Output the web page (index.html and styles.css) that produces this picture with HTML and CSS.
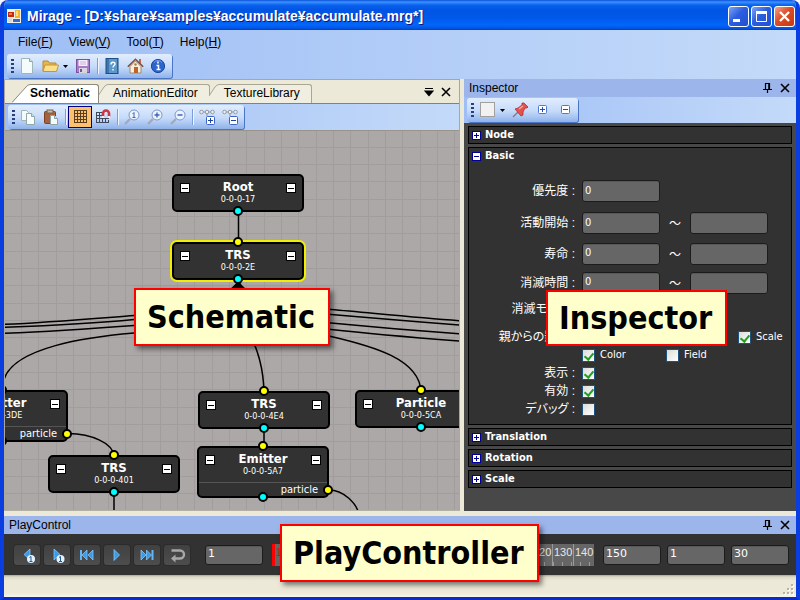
FILE: index.html
```html
<!DOCTYPE html>
<html lang="ja">
<head>
<meta charset="utf-8">
<title>Mirage</title>
<link rel="stylesheet" href="styles.css">
</head>
<body>
<div class="window">
  <header class="titlebar">
    <svg class="app-icon" width="14" height="14" viewBox="0 0 14 14"><rect width="14" height="14" fill="#f4efe0"/><rect x="1" y="3" width="6" height="5" fill="#c22a10"/><rect x="2" y="4" width="3" height="2" fill="#ef7a50"/><rect x="8" y="1" width="5" height="8" fill="#f6b52c"/><rect x="9" y="2" width="2" height="5" fill="#ffe08a"/><rect x="1" y="9" width="4" height="4" fill="#d8d8d8"/><rect x="6" y="10" width="7" height="3" fill="#3569c8"/></svg>
    <h1>Mirage - [D:¥share¥samples¥accumulate¥accumulate.mrg*]</h1>
    <div class="window-buttons">
      <button aria-label="Minimize"><svg width="19" height="19"><rect x="4" y="12" width="7" height="3" fill="#fff"/></svg></button>
      <button aria-label="Maximize"><svg width="19" height="19"><path d="M4.500 6v8.500h10V6" fill="none" stroke="#fff"/><rect x="4" y="4" width="11" height="3" fill="#fff"/></svg></button>
      <button class="close" aria-label="Close"><svg width="19" height="19"><path d="M5 5l9 9M14 5l-9 9" stroke="#fff" stroke-width="2.400"/></svg></button>
    </div>
  </header>

  <div class="top">
    <nav class="menu">
      <button>File(<u>F</u>)</button><button>View(<u>V</u>)</button><button>Tool(<u>T</u>)</button><button>Help(<u>H</u>)</button>
    </nav>
    <div class="toolbar">
      <i class="grip"></i>
      <button class="tool" aria-label="New"><svg width="16" height="16"><path d="M2.500.5h8l3 3v12h-11z" fill="#f4fbfb" stroke="#9fb5b8"/><path d="M10.500.5v3h3" fill="#d5e5e8" stroke="#8ba4a8"/></svg></button>
      <button class="tool wide" aria-label="Open"><svg width="17" height="16"><path d="M1 13V3h5l1.500 2H14v3" fill="#e7b54b" stroke="#b88a28"/><path d="M1 13.500L3 7h13.500l-2 6.500z" fill="#fbe08c" stroke="#c4953a"/></svg><svg width="5" height="16"><path d="M0 7h5L2.500 10z"/></svg></button>
      <button class="tool" aria-label="Save"><svg width="16" height="16"><rect x="1.500" y="1.500" width="13" height="13" fill="#a67cc9" stroke="#7c52a0"/><rect x="3.500" y="2" width="9" height="6" fill="#f3edf8"/><path d="M5 4h6M5 6h6" stroke="#c8b4d8"/><rect x="4" y="10" width="8" height="5" fill="#d9d5de"/><rect x="5" y="11" width="2" height="3" fill="#74558e"/></svg></button>
      <i class="sep"></i>
      <button class="tool" aria-label="Help"><svg width="16" height="16"><rect x="2" y=".5" width="12" height="15" fill="#3a77ad" stroke="#1d4f82"/><rect x="5" y="1" width="8" height="14" fill="#5b99ca"/><path d="M7 6.500c0-3 4-3 4-.5 0 1.500-2 1.500-2 3.500M9 11v1.500" fill="none" stroke="#fff" stroke-width="1.400"/></svg></button>
      <button class="tool" aria-label="Home"><svg width="17" height="16"><path d="M3 8.500L8.500 3 14 8.500V15H3z" fill="#f8eed8" stroke="#9a8a78"/><path d="M12 5V1h2v6" fill="#b96a52"/><path d="M.8 8.800L8.500 1.200l7.700 7.600" fill="none" stroke="#7c5140" stroke-width="1.500"/><rect x="7" y="9" width="4" height="6" fill="#b8652f"/><circle cx="8.500" cy="6.500" r="1.200" fill="#a87850"/></svg></button>
      <button class="tool" aria-label="About"><svg width="16" height="16"><circle cx="8" cy="8" r="6.600" fill="#2d65cc" stroke="#1a469f"/><path d="M4 4.500a5 5 0 018 0" stroke="#75a2ec" fill="none"/><path d="M6.500 7.500h2V11M6.500 11.500h4M8 3.500v2" stroke="#fff" stroke-width="1.500" fill="none"/></svg></button>
    </div>
  </div>

  <main class="dock">
    <section class="schematic">
      <div class="tabs">
        <button class="tab active"><svg width="18" height="19"><path d="M0 19L14 3q2-2.500 4-2.500V19z" fill="#fff"/><path d="M0 18.500L14 3q2-2.500 4-2.500" fill="none" stroke="#8d8a7c"/></svg><span>Schematic</span></button>
        <button class="tab"><svg width="10" height="19"><path d="M0 12L6 3Q8 .5 10 .5V19H0z" fill="#f0eee1"/><path d="M0 12L6 3Q8 .5 10 .5" fill="none" stroke="#a9a694"/></svg><span>AnimationEditor</span></button>
        <button class="tab"><svg width="10" height="19"><path d="M0 12L6 3Q8 .5 10 .5V19H0z" fill="#f0eee1"/><path d="M0 12L6 3Q8 .5 10 .5" fill="none" stroke="#a9a694"/></svg><span>TextureLibrary</span></button>
        <div class="tab-actions">
          <button class="glyph" aria-label="Tab list"><svg width="10" height="10"><path d="M1 1.500h8M1 4h8L5 8.500z" stroke="#000" stroke-width="1.200"/></svg></button>
          <button class="glyph" aria-label="Close tab"><svg width="10" height="10"><path d="M1 1l8 8M9 1L1 9" stroke="#000" stroke-width="1.600"/></svg></button>
        </div>
      </div>
      <div class="tool-strip">
        <div class="toolbar">
          <i class="grip"></i>
          <button class="tool" aria-label="Copy"><svg width="16" height="16"><path d="M1.500 1.500h5l2 2v8h-7z" fill="#f4fbfb" stroke="#9fb5b8"/><path d="M6.500 4.500h5l3 3v8h-8z" fill="#f8fdfd" stroke="#8fa8ac"/><path d="M11.500 4.500v3h3" fill="#cfe0e4" stroke="#8fa8ac"/></svg></button>
          <button class="tool" aria-label="Paste"><svg width="16" height="16"><rect x="1.500" y="2.500" width="11" height="12" rx="1" fill="#a5623c" stroke="#7a4123"/><rect x="4" y="1" width="6" height="3" fill="#c9b9a8" stroke="#77614f"/><path d="M7.500 6.500h4l3 3v6h-7z" fill="#f5fafa" stroke="#8fa2a6"/><path d="M11.500 6.500v3h3" fill="#d4e2e4" stroke="#8fa2a6"/></svg></button>
          <i class="sep"></i>
          <button class="tool pressed" aria-label="Grid"><svg width="16" height="16"><path d="M2.500 1v13M5.500 1v13M8.500 1v13M11.500 1v13M14.500 1v13M2 1.500h13M2 4.500h13M2 7.500h13M2 10.500h13M2 13.500h13" stroke="#5a3e1c"/></svg></button>
          <button class="tool" aria-label="Snap"><svg width="16" height="16"><path d="M1.500 3v11M4.500 3v11M7.500 3v11M10.500 9v5M13.500 11v3M1 3.500h6M1 6.500h7M1 9.500h13M1 13.500h13" stroke="#40485c"/><path d="M8 8V4.500a3 3 0 016 0V8" fill="none" stroke="#cf3340" stroke-width="2.600"/><path d="M6.700 8h2.600M12.700 8h2.600" stroke="#eee" stroke-width="2"/></svg></button>
          <i class="sep"></i>
          <button class="tool" aria-label="Actual size"><svg width="17" height="16"><path d="M1 15l5-5" stroke="#a3a9b8" stroke-width="2.400"/><circle cx="10" cy="6" r="5" fill="#eaf4ff" stroke="#8196c6"/><path d="M8.500 5l1.500-1.500V9M8.500 8.500h3" fill="none" stroke="#3f62bd"/></svg></button>
          <button class="tool" aria-label="Zoom in"><svg width="17" height="16"><path d="M1 15l5-5" stroke="#a3a9b8" stroke-width="2.400"/><circle cx="10" cy="6" r="5" fill="#eaf4ff" stroke="#8196c6"/><path d="M7.500 6h5M10 3.500v5" stroke="#3f62bd" stroke-width="1.400"/></svg></button>
          <button class="tool" aria-label="Zoom out"><svg width="17" height="16"><path d="M1 15l5-5" stroke="#a3a9b8" stroke-width="2.400"/><circle cx="10" cy="6" r="5" fill="#eaf4ff" stroke="#8196c6"/><path d="M7.500 6h5" stroke="#3f62bd" stroke-width="1.400"/></svg></button>
          <i class="sep"></i>
          <button class="tool" aria-label="Expand all"><svg width="16" height="16"><path d="M3 3h10M8 3v4" stroke="#8e98a8"/><circle cx="2.500" cy="3" r="1.800" fill="#eee" stroke="#9299a4"/><circle cx="8" cy="3" r="1.800" fill="#eee" stroke="#9299a4"/><circle cx="13.500" cy="3" r="1.800" fill="#eee" stroke="#9299a4"/><rect x="7.500" y="7.500" width="8" height="8" rx="1" fill="#fff" stroke="#3d63c4"/><path d="M9 11.500h5M11.500 9v5" stroke="#20429f"/></svg></button>
          <button class="tool" aria-label="Collapse all"><svg width="16" height="16"><path d="M3 3h10M8 3v4" stroke="#8e98a8"/><circle cx="2.500" cy="3" r="1.800" fill="#eee" stroke="#9299a4"/><circle cx="8" cy="3" r="1.800" fill="#eee" stroke="#9299a4"/><circle cx="13.500" cy="3" r="1.800" fill="#eee" stroke="#9299a4"/><rect x="7.500" y="7.500" width="8" height="8" rx="1" fill="#fff" stroke="#3d63c4"/><path d="M9 11.500h5" stroke="#20429f"/></svg></button>
        </div>
      </div>
      <div class="canvas">
        <svg class="edges" width="100%" height="100%">
          <defs><pattern id="grid" width="52" height="52" patternUnits="userSpaceOnUse" x="16" y="16"><path d="M.5 0v52M17.500 0v52M35.500 0v52M0 .5h52M0 17.500h52M0 34.500h52" stroke="#a19d9c"/></pattern></defs>
          <rect width="100%" height="100%" fill="url(#grid)"/>
          <g transform="translate(-5 -130)" fill="none" stroke="#000" stroke-width="1.500">
            <path d="M238.500 211v31M114 491v30M264 428v18"/>
            <path d="M238.500 281C220 304 180 311 134 314.500S40 322 0 323.500"/>
            <path d="M238.500 281C220 306 180 314 134 318.500S40 325 0 326.500"/>
            <path d="M238.500 281C220 309 180 321 134 324.500S40 331 0 332.500"/>
            <path d="M238.500 281C200 320 170 329 134 332S4 345 3 385"/>
            <path d="M238.500 281C250 300 290 305 331 308.500S420 317 464 320"/>
            <path d="M238.500 281C250 304 290 310 331 313.500S420 321 464 324.500"/>
            <path d="M238.500 281C250 307 290 318 331 322S420 330 464 333"/>
            <path d="M238.500 281C250 309 290 324 331 328.500S420 337 464 340.500"/>
            <path d="M238.500 281C250 310 290 326 331 335.500S420 358 421 391"/>
            <path d="M238.500 281C240 330 263 340 264 392"/>
            <path d="M68 432.500C92 433 113 442 114 455M329 489C343 489 357 502 359 514"/>
            <path d="M238.500 282l-9 8h18z" fill="#000" stroke="none"/>
          </g>
        </svg>

        <article class="node n-root"><button class="fold" aria-label="Fold inputs"></button><div><h2>Root</h2><p>0-0-0-17</p></div><button class="fold" aria-label="Fold outputs"></button><i class="port out"></i></article>
        <article class="node n-trs selected"><button class="fold" aria-label="Fold inputs"></button><div><h2>TRS</h2><p>0-0-0-2E</p></div><button class="fold" aria-label="Fold outputs"></button><i class="port in"></i><i class="port out"></i></article>
        <article class="node n-em1 tall"><button class="fold" aria-label="Fold inputs"></button><div><h2>Emitter</h2><p>0-0-0-3DE</p></div><button class="fold" aria-label="Fold outputs"></button><footer>particle</footer><i class="port in"></i><i class="port out"></i><i class="port side"></i></article>
        <article class="node n-trs401"><button class="fold" aria-label="Fold inputs"></button><div><h2>TRS</h2><p>0-0-0-401</p></div><button class="fold" aria-label="Fold outputs"></button><i class="port in"></i><i class="port out"></i></article>
        <article class="node n-trs4e4"><button class="fold" aria-label="Fold inputs"></button><div><h2>TRS</h2><p>0-0-0-4E4</p></div><button class="fold" aria-label="Fold outputs"></button><i class="port in"></i><i class="port out"></i></article>
        <article class="node n-em2 tall"><button class="fold" aria-label="Fold inputs"></button><div><h2>Emitter</h2><p>0-0-0-5A7</p></div><button class="fold" aria-label="Fold outputs"></button><footer>particle</footer><i class="port in"></i><i class="port out"></i><i class="port side"></i></article>
        <article class="node n-part"><button class="fold" aria-label="Fold inputs"></button><div><h2>Particle</h2><p>0-0-0-5CA</p></div><button class="fold" aria-label="Fold outputs"></button><i class="port in"></i><i class="port out"></i></article>
      </div>
      <div class="callout c-schematic">Schematic</div>
    </section>

    <section class="inspector">
      <div class="panel-head"><h2>Inspector</h2>
        <button class="glyph" aria-label="Pin"><svg width="10" height="10"><path d="M2.500 6V.5h4V6M5.800.5V6M0 6.500h9M4.500 7v3" fill="none" stroke="#000" stroke-width="1.200"/></svg></button>
        <button class="glyph" aria-label="Close Inspector"><svg width="10" height="10"><path d="M1 1l8 8M9 1L1 9" stroke="#000" stroke-width="1.600"/></svg></button>
      </div>
      <div class="tool-strip">
        <div class="toolbar compact">
          <i class="grip"></i>
          <button class="tool wide" aria-label="Colour"><svg width="16" height="16"><rect x=".5" y=".5" width="14" height="14" fill="#f1f1f1" stroke="#a0a0a0"/></svg><svg width="5" height="16"><path d="M0 7h5L2.500 10z"/></svg></button>
          <button class="tool" aria-label="Pin selection"><svg width="16" height="16"><path d="M1 15l5-5" stroke="#77808c" stroke-width="1.500"/><path d="M3 7l3-1 4-3V1h2l4 4-1 1h-2l-2 4v3l-2 1z" fill="#e2524f" stroke="#b52c30" stroke-width=".8"/><path d="M7 7l4-3" stroke="#f9aaa4" stroke-width="1.300"/></svg></button>
          <button class="tool" aria-label="Expand groups"><svg width="16" height="16"><rect x="3.500" y="3.500" width="8" height="8" rx="1" fill="#fff" stroke="#4e78dc"/><path d="M5 7.500h5M7.500 5v5" stroke="#2348b4"/></svg></button>
          <button class="tool" aria-label="Collapse groups"><svg width="16" height="16"><rect x="3.500" y="3.500" width="8" height="8" rx="1" fill="#fff" stroke="#4e78dc"/><path d="M5 7.500h5" stroke="#2348b4"/></svg></button>
        </div>
      </div>
      <div class="groups">
        <section class="group"><button class="group-head"><i class="plus"></i>Node</button></section>
        <section class="group">
          <button class="group-head"><i class="plus open"></i>Basic</button>
          <form class="fields">
            <div class="row lead"><label for="priority">優先度 :</label><input id="priority" type="text" value="0"></div>
            <div class="row lead"><label for="start">活動開始 :</label><input id="start" type="text" value="0"><span class="tilde">～</span><input type="text" aria-label="活動開始 to"></div>
            <div class="row"><label for="life">寿命 :</label><input id="life" type="text" value="0"><span class="tilde">～</span><input type="text" aria-label="寿命 to"></div>
            <div class="row"><label for="end">消滅時間 :</label><input id="end" type="text" value="0"><span class="tilde">～</span><input type="text" aria-label="消滅時間 to"></div>
            <div class="row mode"><span class="name">消滅モード :</span></div>
            <div class="row line"><span class="name">親からの影響 :</span><div class="checks"><label class="third"><input type="checkbox" checked>Scale</label></div></div>
            <div class="row line"><span class="name"></span><div class="checks"><label><input type="checkbox" checked>Color</label><label><input type="checkbox">Field</label></div></div>
            <div class="row line"><label for="show">表示 :</label><input id="show" type="checkbox" checked></div>
            <div class="row line"><label for="valid">有効 :</label><input id="valid" type="checkbox" checked></div>
            <div class="row line"><label for="debug">デバッグ :</label><input id="debug" type="checkbox"></div>
          </form>
        </section>
        <section class="group"><button class="group-head"><i class="plus"></i>Translation</button></section>
        <section class="group"><button class="group-head"><i class="plus"></i>Rotation</button></section>
        <section class="group"><button class="group-head"><i class="plus"></i>Scale</button></section>
      </div>
      <div class="callout c-inspector">Inspector</div>
    </section>
  </main>

  <section class="play">
    <div class="panel-head"><h2>PlayControl</h2>
      <button class="glyph" aria-label="Pin"><svg width="10" height="10"><path d="M2.500 6V.5h4V6M5.800.5V6M0 6.500h9M4.500 7v3" fill="none" stroke="#000" stroke-width="1.200"/></svg></button>
      <button class="glyph" aria-label="Close PlayControl"><svg width="10" height="10"><path d="M1 1l8 8M9 1L1 9" stroke="#000" stroke-width="1.600"/></svg></button>
    </div>
    <div class="play-body">
      <div class="transport">
        <button aria-label="Step back"><svg width="26" height="18"><path d="M16 3v11L10 8.500z" fill="#3a9be8" stroke="#8fd0ff" stroke-width=".7"/><circle cx="17" cy="13" r="4" fill="#e6f3ff"/><path d="M15.500 11.500L17 10.500V16M15.500 15.500h3" stroke="#1b5a9e" fill="none"/></svg></button>
        <button aria-label="Step forward"><svg width="26" height="18"><path d="M10 3v11l6-5.500z" fill="#3a9be8" stroke="#8fd0ff" stroke-width=".7"/><circle cx="16.500" cy="13" r="4" fill="#e6f3ff"/><path d="M15 11.500l1.500-1V16M15 15.500h3" stroke="#1b5a9e" fill="none"/></svg></button>
        <button aria-label="First frame"><svg width="26" height="18"><path d="M7 4v10" stroke="#63b7f5" stroke-width="2"/><path d="M13 4v10L8 9zM19 4v10l-5-5z" fill="#3a9be8" stroke="#8fd0ff" stroke-width=".7"/></svg></button>
        <button aria-label="Play"><svg width="26" height="18"><path d="M10 3.500v11L15.500 9z" fill="#3a9be8" stroke="#8fd0ff" stroke-width=".7"/></svg></button>
        <button aria-label="Last frame"><svg width="26" height="18"><path d="M18.500 4v10" stroke="#63b7f5" stroke-width="2"/><path d="M7 4v10l5-5zM12.500 4v10l5-5z" fill="#3a9be8" stroke="#8fd0ff" stroke-width=".7"/></svg></button>
        <button aria-label="Loop"><svg width="26" height="18"><path d="M7.500 4.500H16a3.500 3.500 0 010 8h-5" fill="none" stroke="#a8a8a8" stroke-width="2.400"/><path d="M11.500 8.500v8l-4.500-4z" fill="#a8a8a8"/></svg></button>
      </div>
      <input class="num" type="text" value="1" aria-label="Current frame">
      <div class="timeline"><span class="now">1</span><span></span><span></span><span></span><span></span><span></span><span></span><span></span><span></span><span></span><span></span><span></span><span>120</span><span>130</span><span>140</span></div>
      <div class="range">
        <input class="num" type="text" value="150" aria-label="Last frame number">
        <input class="num" type="text" value="1" aria-label="Step">
        <input class="num" type="text" value="30" aria-label="Frame rate">
      </div>
    </div>
    <div class="callout c-play">PlayController</div>
  </section>
  <footer class="status"><svg width="12" height="12"><path d="M9 1h2v2h-2zM9 5h2v2h-2zM5 5h2v2h-2zM9 9h2v2h-2zM5 9h2v2h-2zM1 9h2v2h-2z" fill="#fff" transform="translate(1 1)"/><path d="M9 1h2v2h-2zM9 5h2v2h-2zM5 5h2v2h-2zM9 9h2v2h-2zM5 9h2v2h-2zM1 9h2v2h-2z" fill="#b8b4a2"/></svg></footer>
</div>
</body>
</html>
```
FILE: styles.css
```css
* { box-sizing: border-box; }
body { margin: 0; background: #f4f6fb; font: 12px/16px "Liberation Sans", "Noto Sans CJK JP", sans-serif; color: #000; }
h1, h2, p { margin: 0; font-size: inherit; font-weight: normal; }
button { padding: 0; border: 0; background: none; font: inherit; color: inherit; }
svg { display: block; flex: none; }

.window {
  display: flex; flex-direction: column; min-height: 100vh; overflow: hidden;
  border: solid #0a2fd6; border-width: 0 4px 4px; border-color: #0b4fe6 #0a3ee0 #0a2bc8 #0a3ee0;
  border-radius: 8px 8px 0 0; background: #ece9d8;
}

.titlebar {
  display: flex; align-items: center; gap: 6px; height: 30px; margin: 0 -4px; padding: 2px 5px 0 7px;
  background: linear-gradient(#0a50d8 0, #3b93ff 2px, #0a62ee 5px, #0054e3 10px, #0058ea 18px, #0366fb 25px, #0057e8 28px, #0440b8 30px);
  color: #fff;
}
.titlebar h1 { flex: 1; font: bold 14px/18px "Liberation Sans", sans-serif; text-shadow: 1px 1px #0a1883; white-space: nowrap; }
.window-buttons { display: flex; gap: 2px; }
.window-buttons button { width: 21px; height: 21px; border: 1px solid #fff; border-radius: 3px; background: linear-gradient(135deg, #7ea4f5, #2c5de0 45%, #2150d0); }
.window-buttons .close { background: linear-gradient(135deg, #f0a58a, #dc4b25 45%, #c63a13); }

.top { background: linear-gradient(90deg, #9ebef5, #c4daf9); padding-bottom: 1px; }
.menu { display: flex; gap: 16px; height: 24px; padding: 0 14px; align-items: center; }
.toolbar {
  display: inline-flex; align-items: center; gap: 7px; height: 24px; padding: 0 6px 0 4px; margin-left: 3px;
  border-radius: 3px; background: linear-gradient(#e1edfd, #c5dafa 55%, #8fb2ea);
  box-shadow: 1px 1px #4a74c6; vertical-align: top;
}
.toolbar.compact { padding-right: 4px; }
.grip { width: 3px; height: 15px; margin-right: -2px; background: repeating-linear-gradient(#27417e 0 2px, transparent 2px 4px); }
.sep { width: 1px; height: 16px; margin: 0 -1px; background: #7b9edb; box-shadow: 1px 0 #f0f6ff; }
.tool { display: flex; align-items: center; justify-content: center; width: 16px; height: 22px; }
.tool.wide { width: 26px; gap: 4px; }
.tool.pressed { width: 24px; margin: 0 -4px; border: 1px solid #00007f; background: #fdc06d; }

.dock { flex: 1; display: grid; grid-template-columns: 456fr 4px 332fr; border-bottom: 5px solid #ece9d8; }
.schematic { position: relative; display: flex; flex-direction: column; min-width: 0; border: 1px solid #aca899; border-bottom: 1px solid #b5b1a4; }
.tabs { display: flex; align-items: flex-end; height: 24px; padding-left: 7px; background: #ece9d8; border-bottom: 1px solid #85826f; }
.tab { display: flex; height: 19px; position: relative; margin-left: -1px; }
.tab span { height: 19px; padding: 0 11px 0 5px; border: solid #a9a694; border-width: 1px 1px 0 0; border-radius: 0 3px 0 0; background: #f0eee1; line-height: 17px; }
.tab.active { z-index: 1; margin-left: 0; }
.tab.active span { padding: 0 8px 0 0; background: #fff; font-weight: bold; border-color: #8d8a7c; }
.tab-actions { display: flex; gap: 7px; margin: 0 8px 6px auto; }
.glyph { display: block; width: 10px; height: 10px; }
.tool-strip { height: 26px; padding-top: 1px; background: linear-gradient(90deg, #9ebef5, #c4daf9); }
.canvas { position: relative; flex: 1; min-height: 380px; overflow: hidden; background: #aca8a7; border-top: 1px solid #98948c; }
.edges { position: absolute; inset: 0; }

.node {
  position: absolute; display: grid; grid-template-columns: 10px 1fr 10px; align-content: start;
  width: 132px; height: 38px; padding: 4px 6px 0; border: 2px solid #000; border-radius: 5px;
  background: #323232; color: #fff; text-align: center; font-family: "DejaVu Sans Condensed", "DejaVu Sans", sans-serif;
}
.node h2 { font-size: 13px; line-height: 14px; font-weight: bold; }
.node p { font-size: 9px; line-height: 10px; }
.node.tall { height: 52px; }
.node footer { grid-column: 1 / -1; margin: 6px -6px 0; padding-right: 9px; border-top: 1px solid #555; font-size: 11px; line-height: 13px; text-align: right; }
.node.selected { box-shadow: 0 0 0 2px #f2ee00; }
.fold { width: 10px; height: 10px; margin-top: 3px; border: 1px solid #000; background: linear-gradient(#000, #000) 1px 4px / 6px 1px no-repeat #fff; }
.port { position: absolute; width: 10px; height: 10px; border: 2px solid #000; border-radius: 50%; background: #ff0; }
.port.in { left: 59px; top: -7px; }
.port.out { left: 59px; bottom: -6px; background: #0ff; }
.port.side { right: -6px; bottom: 1px; }
.n-root { left: 167px; top: 43px; }
.n-trs { left: 167px; top: 111px; }
.n-em1 { left: -69px; top: 259px; }
.n-trs401 { left: 43px; top: 324px; }
.n-trs4e4 { left: 193px; top: 260px; }
.n-em2 { left: 192px; top: 315px; }
.n-part { left: 350px; top: 259px; }

.inspector { grid-column: 3; position: relative; display: flex; flex-direction: column; background: #484848; }
.panel-head { display: flex; align-items: center; gap: 7px; height: 18px; padding: 0 6px 0 5px; background: #9cb6eb; }
.panel-head h2 { flex: 1; }
.groups { display: flex; flex-direction: column; gap: 3px; padding: 3px 4px 0; background: #484848; }
.group { border: 1px solid #000; background: #323232; color: #fff; }
.group-head { display: flex; align-items: center; gap: 4px; width: 100%; height: 16px; padding-left: 3px; font: bold 11px/16px "DejaVu Sans Condensed", "DejaVu Sans", sans-serif; }
.plus { width: 9px; height: 9px; border: 1px solid #000096; background: linear-gradient(#000096, #000096) center / 5px 1px no-repeat, linear-gradient(#000096, #000096) center / 1px 5px no-repeat #fff; }
.plus.open { background: linear-gradient(#000096, #000096) center / 5px 1px no-repeat #fff; }

.fields { display: flex; flex-direction: column; padding: 11px 4px 6px 0; }
.row { display: flex; align-items: center; height: 29px; }
.row.lead { height: 32px; }
.row.mode { height: 24px; margin-bottom: 7px; }
.row.line { height: 18px; }
.row > label, .name { width: 106px; margin-right: 7px; text-align: right; white-space: nowrap; font-feature-settings: "palt"; }
.row input[type="text"], .num {
  min-width: 0; border: 1px solid #1c1c1c; border-radius: 3px; background: #666; color: #fff;
  box-shadow: inset 0 1px #585858; outline: 0; padding: 0 3px 2px 2px; font: 11px/14px "DejaVu Sans", sans-serif;
}
.row input[type="text"] { width: 78px; height: 22px; font-family: "DejaVu Sans Condensed", "DejaVu Sans", sans-serif; }
.tilde { width: 30px; text-align: center; font-family: "Noto Sans CJK JP", sans-serif; }
input[type="checkbox"] { appearance: none; width: 13px; height: 13px; margin: 0; border: 1px solid #1c5180; background: linear-gradient(135deg, #dcdcd7, #fff); }
input[type="checkbox"]:checked::after { content: ""; display: block; width: 4px; height: 7px; margin: 1px 0 0 3px; border: solid #21a121; border-width: 0 2px 2px 0; rotate: 40deg; }
.checks { display: grid; grid-template-columns: 84px 72px 1fr; flex: 1; font: 11px/16px "DejaVu Sans Condensed", "DejaVu Sans", sans-serif; }
.checks label { display: flex; align-items: center; gap: 5px; }
.checks .third { grid-column: 3; }

.play { position: relative; }
.play-body { display: flex; align-items: center; height: 41px; padding: 0 7px 0 10px; background: #323232; }
.transport { display: flex; gap: 4px; }
.transport button { width: 26px; height: 20px; border-radius: 3px; background: linear-gradient(#414141, #4d4d4d); box-shadow: 0 0 0 1px #2b2b2b; }
.num { width: 58px; height: 20px; margin-left: 15px; }
.range { display: flex; gap: 6px; margin-left: 9px; }
.range .num { margin-left: 0; }
.timeline {
  flex: 1; display: flex; height: 22px; margin-left: 9px; overflow: hidden; border-left: 3px solid #f00; color: #e6e6e6; font-size: 11px; line-height: 16px;
  background: repeating-linear-gradient(90deg, transparent 0 8px, #999 8px 9px) bottom / 100% 4px no-repeat #666;
}
.timeline span { flex: 0 0 21px; border-left: 1px solid #999; padding-left: 1px; }
.timeline .now { flex: 1; border: 0; color: #f00; }
.status { display: flex; justify-content: flex-end; align-items: flex-end; height: 22px; padding: 0 2px 2px 0; background: linear-gradient(#a9a695 0, #dedac8 2px, #ece9d8 6px, #ece9d8 18px, #f8f6ea); }

.callout {
  position: absolute; z-index: 5; padding: 0 13px 0 11px; border: 2px solid #f00; background: #ffffcc; white-space: nowrap; color: #000;
  font: bold 32px/54px "DejaVu Sans Condensed", "DejaVu Sans", sans-serif; box-shadow: 3px 3px 5px rgba(0, 0, 0, .5);
}
.c-schematic { left: 129px; top: 208px; }
.c-inspector { left: 82px; top: 211px; line-height: 52px; box-shadow: none; }
.c-play { left: 276px; top: 8px; }
```
